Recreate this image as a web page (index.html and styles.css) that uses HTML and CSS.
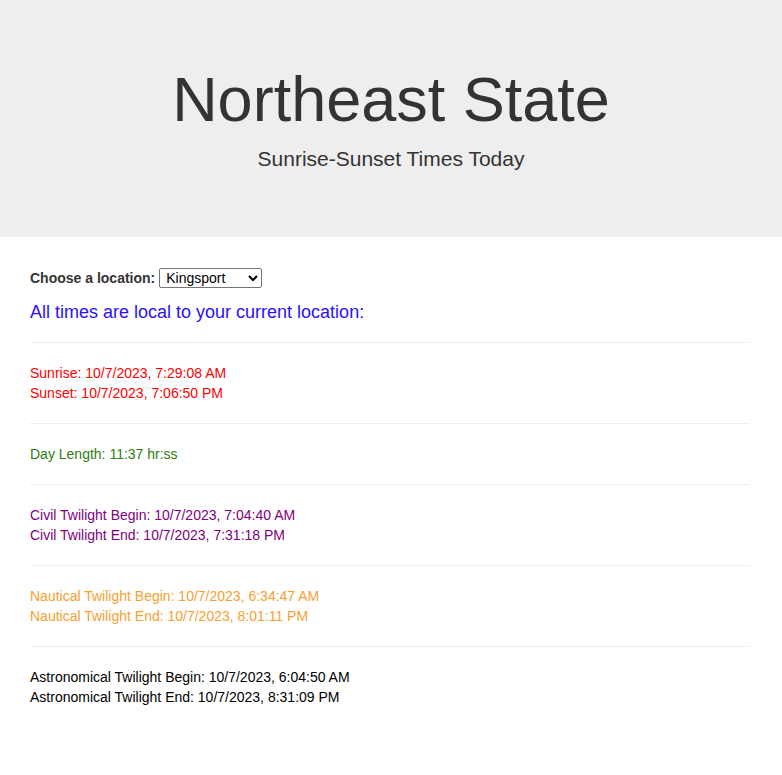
FILE: index.html
```
<!DOCTYPE html>
<html lang="en">
<head>
<meta charset="utf-8">
<title>Northeast State - Sunrise-Sunset Times</title>
<link rel="stylesheet" href="styles.css">
</head>
<body>
<header class="jumbotron">
  <h1 class="title">Northeast State</h1>
  <p class="subtitle">Sunrise-Sunset Times Today</p>
</header>
<main class="content">
  <div class="form-row">
    <label class="loc-label" for="loc">Choose a location:</label>
    <select id="loc" class="loc-select">
      <option>Kingsport</option>
      <option>Blountville</option>
      <option>Elizabethton</option>
      <option>Gray</option>
      <option>Johnson City</option>
    </select>
  </div>
  <h4 class="note">All times are local to your current location:</h4>
  <hr class="rule">
  <p class="times red">Sunrise: 10/7/2023, 7:29:08 AM<br>Sunset: 10/7/2023, 7:06:50 PM</p>
  <hr class="rule">
  <p class="times green">Day Length: 11:37 hr:ss</p>
  <hr class="rule">
  <p class="times purple">Civil Twilight Begin: 10/7/2023, 7:04:40 AM<br>Civil Twilight End: 10/7/2023, 7:31:18 PM</p>
  <hr class="rule">
  <p class="times orange">Nautical Twilight Begin: 10/7/2023, 6:34:47 AM<br>Nautical Twilight End: 10/7/2023, 8:01:11 PM</p>
  <hr class="rule">
  <p class="times black">Astronomical Twilight Begin: 10/7/2023, 6:04:50 AM<br>Astronomical Twilight End: 10/7/2023, 8:31:09 PM</p>
</main>
</body>
</html>
```

FILE: styles.css
```
* { box-sizing: border-box; }
html, body { margin: 0; padding: 0; }
body {
  font-family: "Liberation Sans", Arial, sans-serif;
  font-size: 14px;
  line-height: 20px;
  color: #333;
  background: #fff;
}
.jumbotron {
  background: #eeeeee;
  padding: 46px 30px 48px;
  text-align: center;
  margin-bottom: 31px;
}
.title {
  margin: 19px 0 10px;
  font-size: 63px;
  font-weight: 500;
  line-height: 1.1;
  color: #333;
}
.subtitle {
  margin: 0 0 15px;
  font-size: 21px;
  line-height: 30px;
  color: #333;
}
.content {
  padding: 0 32px 0 30px;
}
.form-row {
  display: flex;
  align-items: center;
  height: 20px;
  margin-top: 0;
}
.loc-label {
  font-weight: bold;
  color: #333;
  margin-right: 4px;
}
.loc-select {
  width: 103px;
  height: 20px;
  font-family: "Liberation Sans", Arial, sans-serif;
  font-size: 14px;
  color: #000;
  border: 1px solid #767676;
  border-radius: 2px;
  background: #fff;
  padding: 0 2px;
}
.note {
  margin: 14px 0 0;
  font-size: 18px;
  font-weight: 500;
  line-height: 20px;
  color: #2a10ff;
}
.rule {
  margin: 20px 0;
  border: 0;
  border-top: 1px solid #eee;
  height: 0;
}
.times { margin: 0; }
.red { color: #ff0000; }
.green { color: #2e7d10; }
.purple { color: #800080; }
.orange { color: #f7a030; }
.black { color: #000; }
```
